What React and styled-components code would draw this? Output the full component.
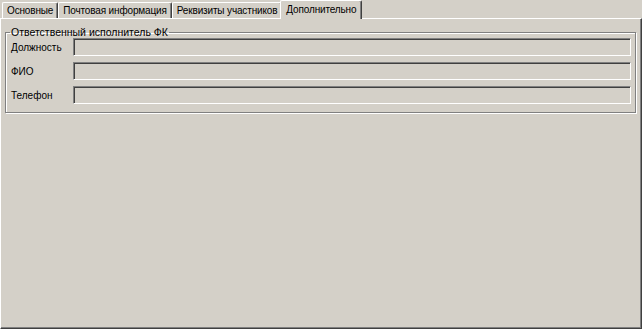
import React from 'react';
import styled, { createGlobalStyle } from 'styled-components';

const GlobalStyle = createGlobalStyle`
  html, body {
    margin: 0;
    padding: 0;
    background: #d4d0c8;
  }
  body {
    font-family: Tahoma, "Liberation Sans", Arial, sans-serif;
    font-size: 10px;
    color: #000;
  }
`;

const tabs = ['Основные', 'Почтовая информация', 'Реквизиты участников', 'Дополнительно'];
const fields = ['Должность', 'ФИО', 'Телефон'];

const Window = styled.div`
  width: 642px;
  height: 329px;
  display: flex;
  flex-direction: column;
  box-sizing: border-box;
  background: #d4d0c8;
  overflow: hidden;
`;

const TabStrip = styled.div`
  display: flex;
  align-items: flex-end;
  height: 18px;
  padding-left: 2px;
  position: relative;
  z-index: 1;
`;

const Tab = styled.div`
  box-sizing: border-box;
  height: ${({ active }) => (active ? '19px' : '16px')};
  margin-bottom: ${({ active }) => (active ? '-1px' : '0')};
  margin-left: ${({ active }) => (active ? '-2px' : '0')};
  padding: ${({ active }) => (active ? '3px 5px 0 5px' : '2px 4px 0 4px')};
  background: #d4d0c8;
  border-top: 1px solid #fff;
  border-left: 1px solid #fff;
  border-right: 1px solid #404040;
  box-shadow: inset -1px 0 0 #808080;
  border-radius: 2px 2px 0 0;
  white-space: nowrap;
  line-height: 12px;
  letter-spacing: -0.15px;
`;

const Panel = styled.div`
  flex: 1;
  box-sizing: border-box;
  border-top: 1px solid #fff;
  border-left: 1px solid #fff;
  border-right: 1px solid #404040;
  border-bottom: 1px solid #404040;
  box-shadow: inset -1px -1px 0 #808080;
  padding: 7px 5px 0 4px;
`;

const GroupBox = styled.fieldset`
  margin: 0;
  box-sizing: border-box;
  border: 1px solid #808080;
  box-shadow: 1px 1px 0 #fff, inset 1px 1px 0 #fff;
  padding: 0 4px 8px 5px;
  display: flex;
  flex-direction: column;
  gap: 6px;
`;

const Legend = styled.legend`
  padding: 0 1px;
  margin-left: -1px;
  font-size: 10.5px;
`;

const Row = styled.div`
  display: flex;
  align-items: center;
`;

const Label = styled.div`
  width: 62px;
`;

const Field = styled.div`
  flex: 1;
  height: 18px;
  box-sizing: border-box;
  background: #d4d0c8;
  border-top: 1px solid #808080;
  border-left: 1px solid #808080;
  border-right: 1px solid #fff;
  border-bottom: 1px solid #fff;
  box-shadow: inset 1px 1px 0 #404040, inset -1px -1px 0 #d4d0c8;
`;

export default function App() {
  return (
    <>
      <GlobalStyle />
      <Window>
        <TabStrip>
          {tabs.map((t, i) => (
            <Tab key={t} active={i === tabs.length - 1}>
              {t}
            </Tab>
          ))}
        </TabStrip>
        <Panel>
          <GroupBox>
            <Legend>Ответственный исполнитель ФК</Legend>
            {fields.map((f) => (
              <Row key={f}>
                <Label>{f}</Label>
                <Field />
              </Row>
            ))}
          </GroupBox>
        </Panel>
      </Window>
    </>
  );
}
